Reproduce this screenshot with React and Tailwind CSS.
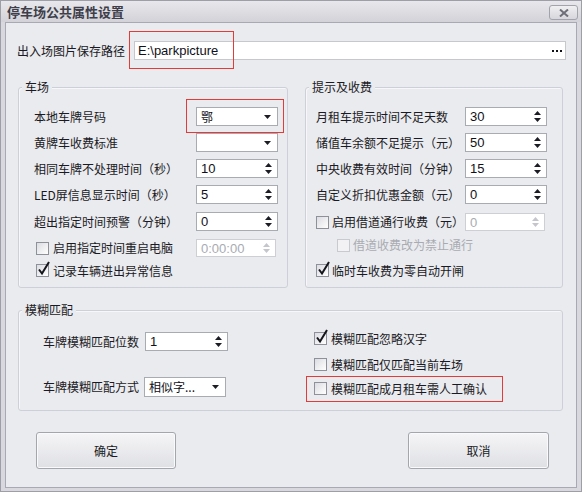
import React from "react";

const cjk = "font-['Noto_Sans_CJK_SC',sans-serif]";
const latin = "font-['Liberation_Sans','Noto_Sans_CJK_SC',sans-serif]";

function Tri({ up, dim }) {
  return (
    <svg width="7" height="4" viewBox="0 0 7 4" className="block">
      <path d={up ? "M3.5 0L7 4H0z" : "M0 0h7L3.5 4z"} fill={dim ? "#c4c6cc" : "#1c1c24"} />
    </svg>
  );
}

function Spin({ value, w = "w-[82px]", h = "h-[19px]", disabled }) {
  return (
    <div
      className={`flex ${h} ${w} items-center border bg-white ${
        disabled ? "border-[#cdcfd5] text-[#a9abb2]" : "border-[#a9abb3] text-[#101018]"
      }`}
    >
      <span className={`flex-1 pl-[4px] text-[13px] leading-none ${latin}`}>{value}</span>
      <span className="flex h-full w-[14px] flex-col items-center justify-between py-[3px] pr-[3px]">
        <Tri up dim={disabled} />
        <Tri dim={disabled} />
      </span>
    </div>
  );
}

function Combo({ value, w = "w-[82px]", h = "h-[19px]" }) {
  return (
    <div className={`flex ${h} ${w} items-center border border-[#a9abb3] bg-white text-[#101018]`}>
      <span className={`flex-1 pl-[4px] text-[12px] leading-none ${cjk}`}>{value}</span>
      <span className="pr-[6px]">
        <Tri />
      </span>
    </div>
  );
}

function Check({ checked, disabled, label, gap = "gap-[4px]" }) {
  return (
    <div className={`flex items-center ${gap}`}>
      <span
        className={`relative h-[13px] w-[13px] border ${
          disabled
            ? "border-[#c8cad0] bg-[#f2f2f4]"
            : "border-[#8e909a] bg-gradient-to-br from-[#dcdde2] to-white"
        }`}
      >
        {checked && (
          <svg width="14" height="15" viewBox="0 0 14 15" className="absolute -top-[4px] left-[0px]">
            <path d="M2 8.5L5 12.5L12 1" stroke="#15151c" strokeWidth="2" fill="none" />
          </svg>
        )}
      </span>
      <span className={`text-[12px] leading-none ${disabled ? "text-[#a9abb2]" : "text-[#1a1a24]"}`}>{label}</span>
    </div>
  );
}

function Row({ label, children, mt = "" }) {
  return (
    <div className={`flex h-[19px] items-center justify-between ${mt}`}>
      <span className="text-[12px] leading-none text-[#1a1a24]">{label}</span>
      {children}
    </div>
  );
}

function Group({ title, className, children }) {
  return (
    <div className={`relative rounded-[3px] border border-[#cdd0d8] shadow-[inset_1px_1px_0_#f7f7f9] ${className}`}>
      <span className="absolute -top-[8px] left-[3px] bg-[#eaebef] px-[3px] text-[12px] leading-[14px] text-[#1a1a24]">
        {title}
      </span>
      {children}
    </div>
  );
}

function Button({ children, w }) {
  return (
    <button
      className={`h-[37px] ${w} rounded-[3px] border border-[#a4a6ae] bg-gradient-to-b from-[#f5f5f7] to-[#dfe0e4] text-[12px] text-[#1a1a24] shadow-[inset_0_0_0_1px_#fafafb]`}
    >
      {children}
    </button>
  );
}

export default function App() {
  return (
    <div className={`relative flex h-[492px] w-[582px] flex-col border border-[#9d9ea8] bg-[#d8d8de] ${cjk}`}>
      {/* title bar */}
      <div className="flex h-[21px] items-center justify-between bg-gradient-to-b from-[#e8e8ec] to-[#d2d2d8] pl-[6px] pr-[3px]">
        <span className="text-[13px] font-bold leading-none text-[#3e3e4a]">停车场公共属性设置</span>
        <span className="mt-[2px] flex h-[15px] w-[29px] items-center justify-center rounded-[3px] border border-[#a2a3ac] bg-gradient-to-b from-[#f0f0f2] to-[#d6d6dc]">
          <svg width="10" height="8" viewBox="0 0 10 8">
            <path d="M1 0.5L9 7.5M9 0.5L1 7.5" stroke="#6d6e78" strokeWidth="2" />
          </svg>
        </span>
      </div>

      {/* client */}
      <div className="mx-[4px] flex h-[466px] flex-col border border-[#a8a9b2] bg-[#eaebef]">
        <div className="mt-[18px] flex items-center justify-between pl-[11px] pr-[10px]">
          <span className="text-[12px] leading-none text-[#1a1a24]">出入场图片保存路径</span>
          <div className="flex h-[19px] w-[432px] items-center justify-between border border-[#c6c8ce] bg-white">
            <span className={`pl-[3px] text-[13px] leading-none text-[#101018] ${latin}`}>E:\parkpicture</span>
            <span className="mr-[3px] flex gap-[2px]">
              <span className="h-[2px] w-[2px] bg-[#101018]" />
              <span className="h-[2px] w-[2px] bg-[#101018]" />
              <span className="h-[2px] w-[2px] bg-[#101018]" />
            </span>
          </div>
        </div>

        <div className="ml-[12px] mt-[27px] flex gap-[17px]">
          <Group title="车场" className="h-[201px] w-[270px] pl-[15px] pr-[9px] pt-[19px]">
            <Row label="本地车牌号码">
              <Combo value="鄂" />
            </Row>
            <Row label="黄牌车收费标准" mt="mt-[7px]">
              <Combo value="" />
            </Row>
            <Row label="相同车牌不处理时间（秒）" mt="mt-[7px]">
              <Spin value="10" />
            </Row>
            <Row label="LED屏信息显示时间（秒）" mt="mt-[7px]">
              <Spin value="5" />
            </Row>
            <Row label="超出指定时间预警（分钟）" mt="mt-[8px]">
              <Spin value="0" />
            </Row>
            <div className="mt-[8px] flex h-[18px] items-center justify-between pl-[2px]">
              <Check label="启用指定时间重启电脑" />
              <span className="mr-[2px]">
                <Spin value="0:00:00" w="w-[80px]" h="h-[18px]" disabled />
              </span>
            </div>
            <div className="mt-[4px] flex h-[19px] items-center pl-[2px]">
              <Check checked label="记录车辆进出异常信息" />
            </div>
          </Group>

          <Group title="提示及收费" className="h-[201px] w-[258px] pl-[10px] pr-[15px] pt-[19px]">
            <Row label="月租车提示时间不足天数">
              <Spin value="30" />
            </Row>
            <Row label="储值车余额不足提示（元）" mt="mt-[7px]">
              <Spin value="50" />
            </Row>
            <Row label="中央收费有效时间（分钟）" mt="mt-[7px]">
              <Spin value="15" />
            </Row>
            <Row label="自定义折扣优惠金额（元）" mt="mt-[7px]">
              <Spin value="0" />
            </Row>
            <div className="mt-[9px] flex h-[18px] items-center justify-between">
              <Check label="启用借道通行收费（元）" gap="gap-[3px]" />
              <span className="mr-[2px]">
                <Spin value="0" w="w-[80px]" h="h-[18px]" disabled />
              </span>
            </div>
            <div className="mt-[5px] flex h-[18px] items-center pl-[21px]">
              <Check disabled label="借道收费改为禁止通行" gap="gap-[3px]" />
            </div>
            <div className="mt-[7px] flex h-[19px] items-center">
              <Check checked label="临时车收费为零自动开闸" gap="gap-[3px]" />
            </div>
          </Group>
        </div>

        <Group title="模糊匹配" className="ml-[12px] mt-[22px] flex h-[101px] w-[545px]">
          <div className="w-[295px] pl-[24px] pt-[21px]">
            <div className="flex h-[19px] items-center">
              <span className="w-[102px] text-[12px] leading-none text-[#1a1a24]">车牌模糊匹配位数</span>
              <Spin value="1" w="w-[83px]" />
            </div>
            <div className="mt-[26px] flex h-[20px] items-center">
              <span className="w-[101px] text-[12px] leading-none text-[#1a1a24]">车牌模糊匹配方式</span>
              <Combo value="相似字..." h="h-[20px]" />
            </div>
          </div>
          <div className="pt-[18px]">
            <div className="flex h-[19px] items-center">
              <Check checked label="模糊匹配忽略汉字" />
            </div>
            <div className="mt-[7px] flex h-[19px] items-center">
              <Check label="模糊匹配仅匹配当前车场" />
            </div>
            <div className="mt-[5px] flex h-[19px] items-center">
              <Check label="模糊匹配成月租车需人工确认" />
            </div>
          </div>
        </Group>

        <div className="mt-[21px] flex justify-between pl-[30px] pr-[27px]">
          <Button w="w-[140px]">确定</Button>
          <Button w="w-[141px]">取消</Button>
        </div>
      </div>

      {/* red annotation boxes */}
      <div className="pointer-events-none absolute left-[128px] top-[30px] h-[38px] w-[105px] border border-[#e53a3a]" />
      <div className="pointer-events-none absolute left-[185px] top-[98px] h-[34px] w-[98px] border border-[#e53a3a]" />
      <div className="pointer-events-none absolute left-[305px] top-[375px] h-[26px] w-[197px] border border-[#e53a3a]" />
    </div>
  );
}
